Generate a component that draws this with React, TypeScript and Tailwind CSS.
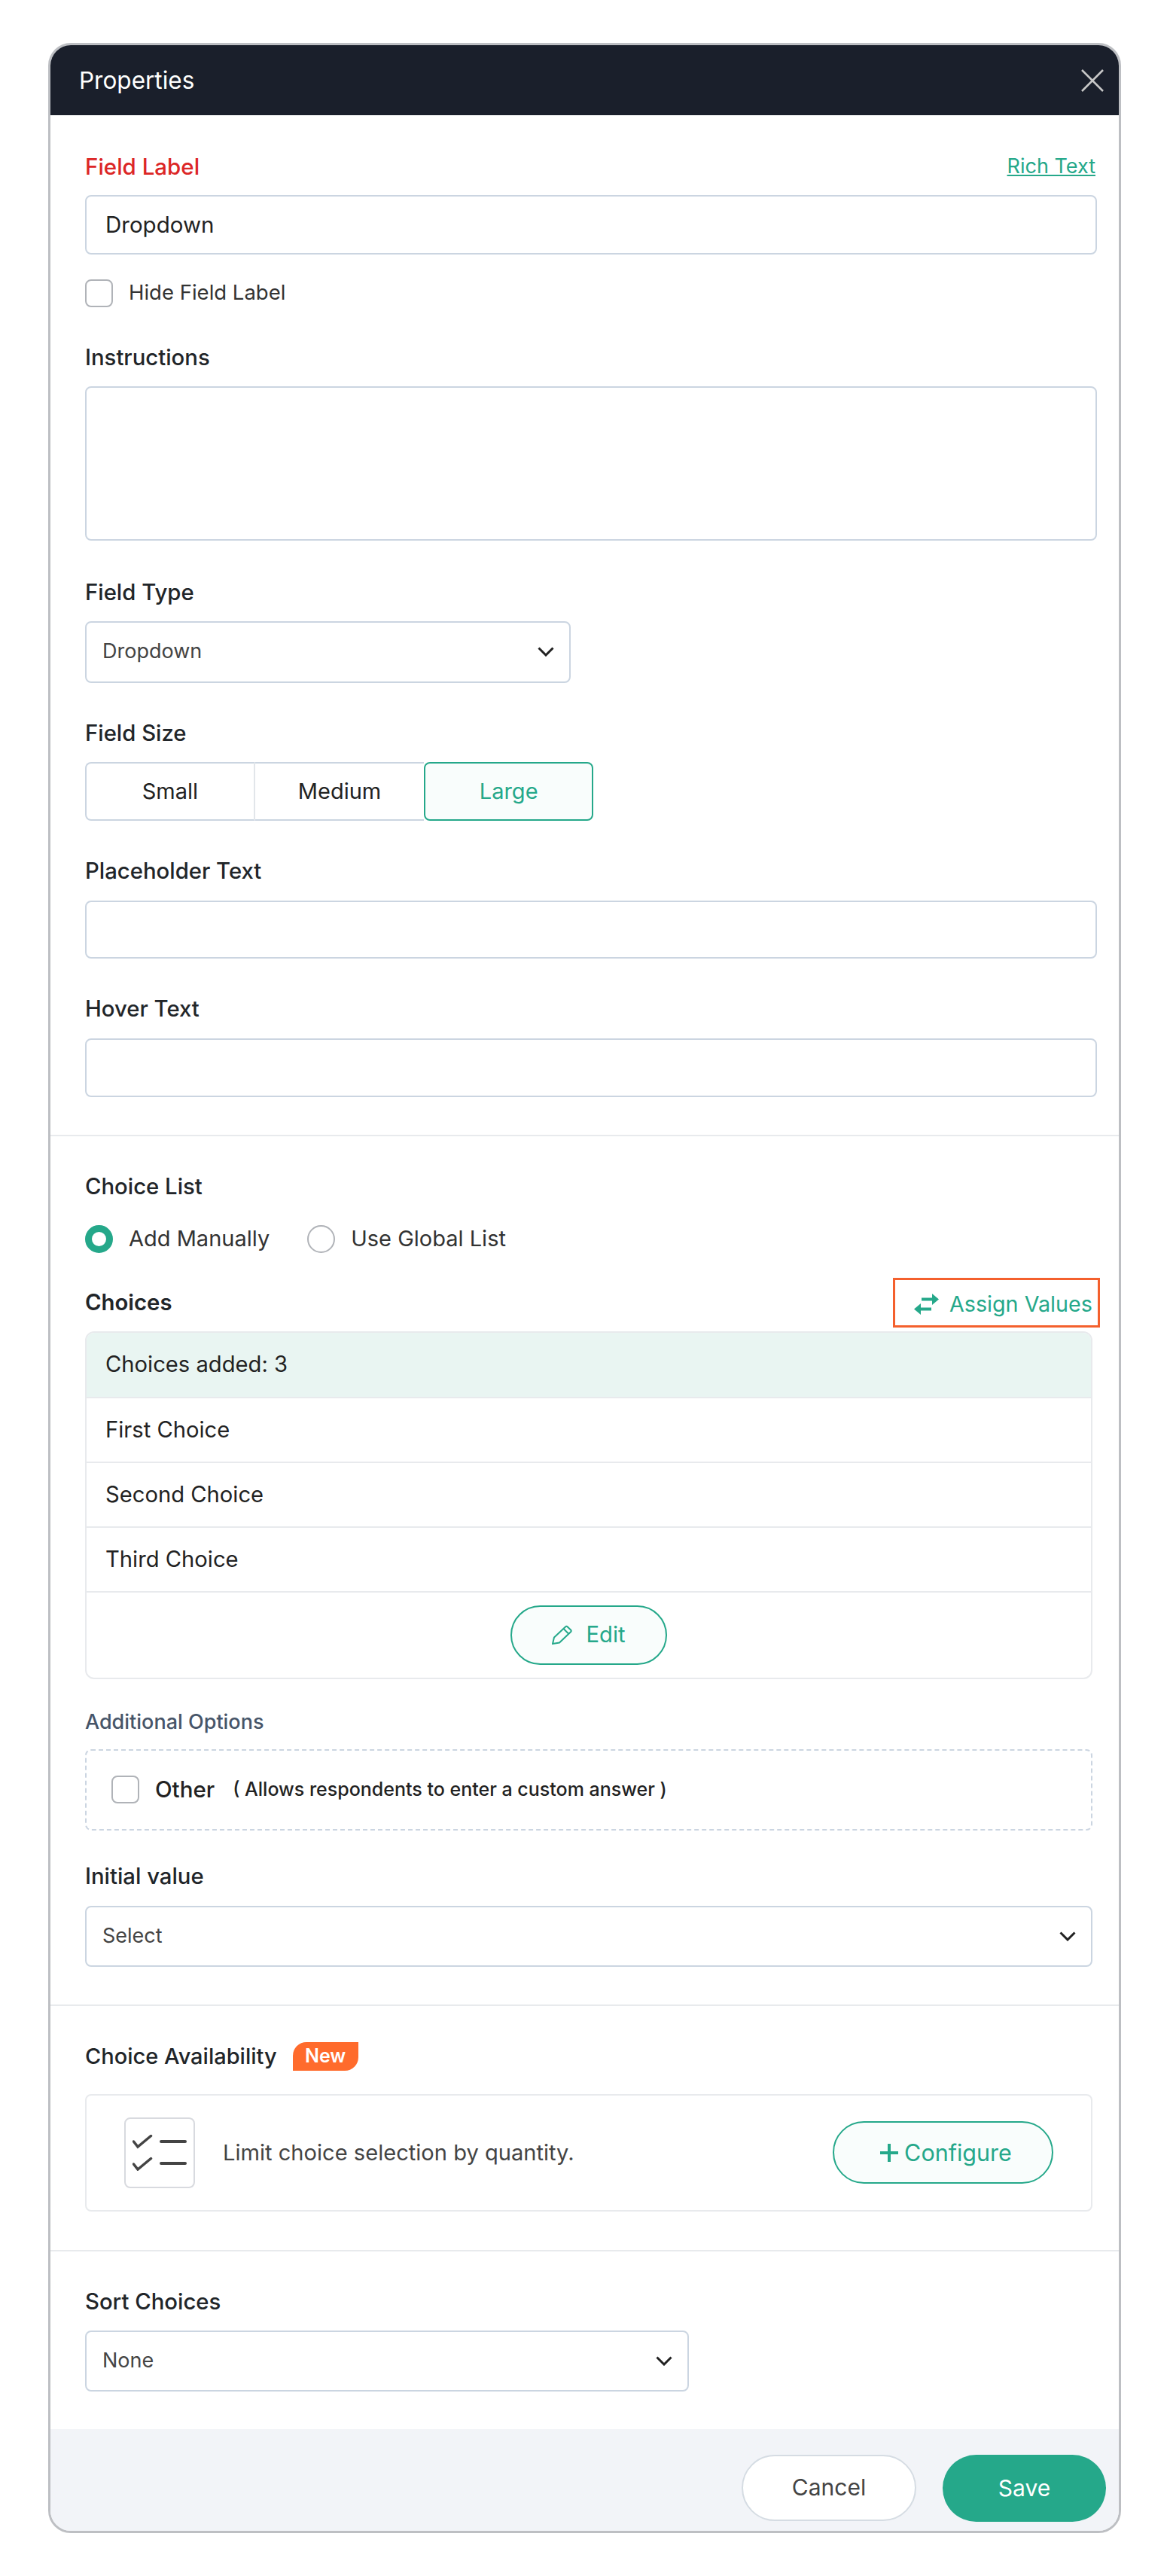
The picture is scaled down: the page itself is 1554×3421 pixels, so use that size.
import { ReactNode } from 'react';

const GREEN = '#25a88a';

function FieldLabel({ children, className = '' }: { children: ReactNode; className?: string }) {
  return <div className={`flex h-[40px] items-center text-[29.3px] font-medium text-[#212529] ${className}`}>{children}</div>;
}

function TextBox({ value = '', className = '' }: { value?: string; className?: string }) {
  return (
    <input
      readOnly
      value={value}
      className={`block w-full rounded-[8px] border-2 border-[#cbd5e1] bg-white px-[25px] text-[29.5px] text-[#222] outline-none ${className}`}
    />
  );
}

function Chevron() {
  return (
    <svg width="22" height="13" viewBox="0 0 22 13" fill="none" stroke="#222" strokeWidth="3">
      <path d="M1.5 1.5L11 11l9.5-9.5" />
    </svg>
  );
}

function SelectBox({ value, className = '' }: { value: string; className?: string }) {
  return (
    <div className={`flex h-[81px] items-center justify-between rounded-[8px] border-2 border-[#cbd5e1] bg-white pl-[21px] pr-[20px] text-[27px] text-[#444] ${className}`}>
      <span>{value}</span>
      <Chevron />
    </div>
  );
}

function CheckBox() {
  return <span className="block h-[37px] w-[37px] shrink-0 rounded-[8px] border-2 border-[#b0b3b8] bg-white" />;
}

function SwapIcon() {
  return (
    <svg width="33" height="28" viewBox="0 0 33 28" fill={GREEN}>
      <path d="M10 5.5h14V0l9 7.5-9 7.5V9.5H10z" />
      <path d="M23 18.5H9V13l-9 7.5L9 28v-5.5h14z" />
    </svg>
  );
}

function PencilIcon() {
  return (
    <svg width="27" height="26" viewBox="0 0 27 26" fill="none" stroke={GREEN} strokeWidth="2">
      <path d="M1 25l2-8.5L18 2.5a2 2 0 0 1 2.8 0L25 6.5a2 2 0 0 1 0 2.8L10 23.5z" />
      <path d="M15.5 5l6.5 6.5" />
    </svg>
  );
}

function ChecklistIcon() {
  return (
    <svg width="72" height="48" viewBox="0 0 72 48" fill="none" stroke="#444" strokeLinecap="round">
      <path d="M1.5 9L7 16 24.5 1.5" strokeWidth="3.5" />
      <path d="M1.5 39L7 46l17.5-14.5" strokeWidth="3.5" />
      <path d="M38 9h32" strokeWidth="4" />
      <path d="M38 38h32" strokeWidth="4" />
    </svg>
  );
}

export default function App() {
  const choices = ['First Choice', 'Second Choice', 'Third Choice'];

  return (
    <div className="min-h-[3421px] bg-white pl-[64px] pt-[57px] font-['Inter',sans-serif]">
      <div className="w-[1425px] overflow-hidden rounded-[30px] border-[3px] border-[#bdbfc3] bg-white">
        {/* Header */}
        <div className="flex h-[93px] items-center justify-between bg-[#1a1f2b] pl-[38px] pr-[20px]">
          <h2 className="text-[31.5px] font-normal text-white">Properties</h2>
          <svg width="30" height="30" viewBox="0 0 30 30" stroke="#c8c8c8" strokeWidth="2.5" fill="none">
            <path d="M1 1l28 28M29 1L1 29" />
          </svg>
        </div>

        {/* Basic */}
        <div className="pl-[46px] pr-[29px] pt-[48px]">
          <div className="flex items-center justify-between">
            <FieldLabel className="!text-[#dc2626] !text-[29.5px]">Field Label</FieldLabel>
            <a className="pr-[2px] text-[27px] text-[#25a88a] underline">Rich Text</a>
          </div>
          <TextBox value="Dropdown" className="mt-[17px] h-[79px]" />
          <label className="mt-[33px] flex h-[37px] items-center gap-[21px] text-[27.5px] text-[#333]">
            <CheckBox />
            Hide Field Label
          </label>

          <FieldLabel className="mt-[47px]">Instructions</FieldLabel>
          <textarea readOnly className="mt-[18px] block h-[205px] w-full resize-none rounded-[8px] border-2 border-[#cbd5e1] bg-white outline-none" />

          <FieldLabel className="mt-[49px]">Field Type</FieldLabel>
          <SelectBox value="Dropdown" className="mt-[18px] !h-[82px] w-[645px]" />

          <FieldLabel className="mt-[47px]">Field Size</FieldLabel>
          <div className="mt-[18px] flex h-[78px] w-[675px] text-[29px] text-[#222]">
            <div className="flex w-[226px] items-center justify-center rounded-l-[8px] border-y-2 border-l-2 border-r-2 border-y-[#cbd5e1] border-l-[#cbd5e1] border-r-[#e2e6ea]">Small</div>
            <div className="flex w-[225px] items-center justify-center border-y-2 border-[#cbd5e1]">Medium</div>
            <div className="flex w-[225px] items-center justify-center rounded-[8px] border-2 border-[#25a88a] bg-[#f9fdfc] text-[#25a88a]">Large</div>
          </div>

          <FieldLabel className="mt-[47px]">Placeholder Text</FieldLabel>
          <TextBox className="mt-[19px] h-[77px]" />

          <FieldLabel className="mt-[47px]">Hover Text</FieldLabel>
          <TextBox className="mt-[19px] h-[78px]" />
        </div>
        <div className="mt-[50px] h-[2px] bg-[#e8eaed]" />

        {/* Choices */}
        <div className="pl-[46px] pr-[35px] pt-[47px]">
          <FieldLabel>Choice List</FieldLabel>
          <div className="mt-[31px] flex h-[37px] items-center text-[29px] text-[#333]">
            <span className="block h-[37px] w-[37px] rounded-full border-[9px] border-[#25a88a] bg-white" />
            <span className="ml-[21px]">Add Manually</span>
            <span className="ml-[50px] block h-[37px] w-[37px] rounded-full border-2 border-[#b0b3b8] bg-white" />
            <span className="ml-[21px]">Use Global List</span>
          </div>

          <div className="mt-[33px] flex h-[66px] items-center justify-between">
            <FieldLabel className="font-semibold">Choices</FieldLabel>
            <div className="-mr-[10px] flex h-[66px] w-[275px] items-center gap-[14px] border-[3px] border-[#f4602d] pl-[25px] pt-[5px] text-[28.7px] text-[#25a88a]">
              <SwapIcon />
              Assign Values
            </div>
          </div>

          <div className="mt-[5px] overflow-hidden rounded-[12px] border-2 border-[#e8eaed] text-[29.2px] text-[#222]">
            <div className="flex h-[87px] items-center border-b-2 border-[#e8eaed] bg-[#e9f5f2] pl-[25px]">Choices added: 3</div>
            {choices.map((choice) => (
              <div key={choice} className="flex h-[86px] items-center border-b-2 border-[#e8eaed] pl-[25px]">
                {choice}
              </div>
            ))}
            <div className="flex h-[113px] items-center justify-center">
              <button className="flex h-[79px] w-[208px] items-center justify-center gap-[18px] rounded-full border-2 border-[#25a88a] bg-[#f9fdfc] text-[#25a88a]">
                <PencilIcon />
                Edit
              </button>
            </div>
          </div>

          <FieldLabel className="mt-[37px] pt-[2px] !text-[27px] !text-[#475569]">Additional Options</FieldLabel>
          <div className="mt-[16px] flex h-[108px] items-center rounded-[8px] border-2 border-dashed border-[#cbd5e1] pl-[33px]">
            <CheckBox />
            <span className="ml-[21px] text-[29.5px] font-medium text-[#222]">Other</span>
            <span className="ml-[24px] text-[25px] font-medium text-[#222]">( Allows respondents to enter a custom answer )</span>
          </div>

          <FieldLabel className="mt-[41px]">Initial value</FieldLabel>
          <SelectBox value="Select" className="mt-[19px]" />
        </div>
        <div className="mt-[50px] h-[2px] bg-[#e8eaed]" />

        {/* Choice Availability */}
        <div className="pl-[46px] pr-[35px] pt-[47px]">
          <div className="flex items-center">
            <FieldLabel className="!text-[29px]">Choice Availability</FieldLabel>
            <span className="ml-[21px] flex h-[38px] w-[87px] items-center justify-center rounded-bl-none rounded-br-[18px] rounded-tl-[18px] rounded-tr-none bg-[#ff6b2c] text-[25px] font-semibold text-white">
              New
            </span>
          </div>
          <div className="mt-[30px] flex h-[156px] items-center rounded-[8px] border-2 border-[#e8eaed] pl-[50px] pr-[50px]">
            <div className="flex h-[94px] w-[94px] items-center justify-center rounded-[8px] border-2 border-[#d8dadf]">
              <ChecklistIcon />
            </div>
            <span className="ml-[37px] text-[29.1px] text-[#444]">Limit choice selection by quantity.</span>
            <button className="ml-auto flex h-[83px] w-[293px] items-center justify-center gap-[8px] rounded-full border-2 border-[#25a88a] bg-[#f9fdfc] pl-[8px] text-[30.5px] text-[#25a88a]">
              <svg width="24" height="24" viewBox="0 0 24 24" stroke={GREEN} strokeWidth="4" fill="none">
                <path d="M12 0v24M0 12h24" />
              </svg>
              Configure
            </button>
          </div>
        </div>
        <div className="mt-[51px] h-[2px] bg-[#e8eaed]" />

        {/* Sort */}
        <div className="pl-[46px] pt-[47px]">
          <FieldLabel>Sort Choices</FieldLabel>
          <SelectBox value="None" className="mt-[18px] w-[802px]" />
        </div>

        {/* Footer */}
        <div className="mt-[50px] flex h-[135px] items-start justify-end gap-[35px] bg-[#f2f4f8] pr-[17px] pt-[34px] text-[30px]">
          <button className="h-[88px] w-[232px] rounded-full border-2 border-[#d5dce3] bg-white text-[#444]">Cancel</button>
          <button className="h-[89px] w-[217px] rounded-full bg-[#25a88a] text-white">Save</button>
        </div>
      </div>
    </div>
  );
}
